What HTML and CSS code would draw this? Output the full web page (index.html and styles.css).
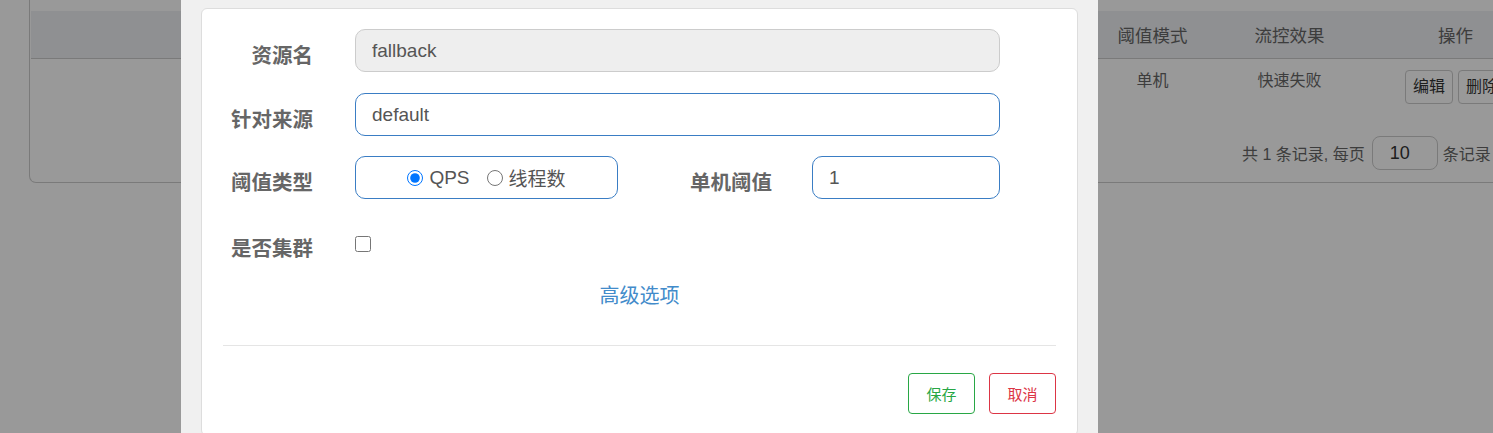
FILE: index.html
```html
<!DOCTYPE html>
<html lang="zh-CN">
<head>
<meta charset="utf-8">
<title>流控规则</title>
<link rel="stylesheet" href="styles.css">
</head>
<body>
<div class="page">
  <div class="table-card">
    <div class="thead">
      <div class="cell"></div>
      <div class="cell">阈值模式</div>
      <div class="cell">流控效果</div>
      <div class="cell">操作</div>
      <div class="cell"></div>
    </div>
    <div class="trow">
      <div class="cell"></div>
      <div class="cell">单机</div>
      <div class="cell">快速失败</div>
      <div class="cell ops"><span class="tbtn">编辑</span><span class="tbtn">删除</span></div>
      <div class="cell"></div>
    </div>
    <div class="pager">共 1 条记录, 每页<span class="pagesize">10</span>条记录</div>
  </div>
</div>
<div class="overlay"></div>
<div class="modal">
  <div class="modal-card">
    <div class="form-row">
      <label class="flabel">资源名</label>
      <input class="finput finput-full disabled" value="fallback" readonly>
    </div>
    <div class="form-row row2">
      <label class="flabel">针对来源</label>
      <input class="finput finput-full" value="default" readonly>
    </div>
    <div class="form-row row3">
      <label class="flabel">阈值类型</label>
      <div class="radio-box">
        <label class="radio-item"><input type="radio" name="grade" checked>QPS</label>
        <label class="radio-item second"><input type="radio" name="grade">线程数</label>
      </div>
      <label class="flabel flabel2">单机阈值</label>
      <input class="finput finput-small" value="1" readonly>
    </div>
    <div class="form-row row4">
      <label class="flabel">是否集群</label>
      <input class="fcheck" type="checkbox">
    </div>
    <div class="adv">高级选项</div>
    <div class="divider"></div>
    <div class="actions">
      <button class="btn btn-save">保存</button>
      <button class="btn btn-cancel">取消</button>
    </div>
  </div>
</div>
</body>
</html>
```
FILE: styles.css
```css
* { box-sizing: border-box; }
html, body { margin: 0; padding: 0; }
body {
  position: relative;
  width: 1493px;
  height: 433px;
  overflow: hidden;
  background: #fff;
  font-family: "Liberation Sans", "Noto Sans CJK SC", sans-serif;
}

/* background table */
.page { padding-left: 29px; }
.table-card {
  width: 1560px;
  background: #fff;
  border: 1px solid #ccc;
  border-top: none;
  border-radius: 0 0 7px 7px;
  padding: 11px 1px 0 1px;
  color: #666;
}
.thead, .trow {
  display: grid;
  grid-template-columns: 1053px 137px 137px 195px 1fr;
}
.thead {
  height: 48px;
  align-items: center;
  background: #eef0f3;
  border-bottom: 1px solid #ccc;
  font-size: 17.5px;
}
.cell { text-align: center; white-space: nowrap; }
.trow {
  padding: 11px 0;
  font-size: 16px;
  line-height: 22px;
  align-items: start;
}
.ops { display: flex; justify-content: center; gap: 5px; }
.tbtn {
  display: inline-block;
  height: 34px;
  padding: 0 7px;
  border: 1px solid #ccc;
  border-radius: 4px;
  line-height: 32px;
  color: #333;
}
.pager {
  margin-top: 21px;
  padding-left: 1211px;
  padding-bottom: 12px;
  display: flex;
  align-items: center;
  font-size: 16px;
  white-space: nowrap;
  color: #666;
}
.pagesize {
  display: inline-block;
  width: 66px;
  height: 34px;
  margin: 0 5px 0 7px;
  border: 1px solid #ccc;
  border-radius: 8px;
  padding-left: 17px;
  font-size: 18px;
  line-height: 32px;
  color: #333;
}

.overlay {
  position: absolute;
  inset: 0;
  background: rgba(0, 0, 0, 0.4);
}

/* modal */
.modal {
  position: absolute;
  top: 0;
  left: 181px;
  width: 917px;
  height: 433px;
  overflow: hidden;
  background: #f0f0f0;
  padding: 8px 20px 0 20px;
}
.modal-card {
  background: #fff;
  border: 1px solid #ddd;
  border-radius: 6px;
  padding: 20px 21px 21px 21px;
}
.form-row {
  display: flex;
  align-items: center;
  height: 43px;
}
.row2 { margin-top: 21px; }
.row3 { margin-top: 20px; }
.row4 { margin-top: 23px; height: 44px; }
.flabel {
  flex: none;
  width: 90px;
  margin-right: 42px;
  padding-top: 6px;
  text-align: right;
  font-family: "Noto Sans CJK SC", sans-serif;
  font-weight: bold;
  font-size: 20.5px;
  color: #666;
  white-space: nowrap;
}
.flabel2 { width: 154px; margin-right: 40px; }
.finput {
  flex: none;
  height: 43px;
  border: 1px solid #3a7dc4;
  border-radius: 10px;
  padding: 0 16px;
  background: #fff;
  font-family: "Liberation Sans", "Noto Sans CJK SC", sans-serif;
  font-size: 19px;
  color: #555;
  outline: none;
}
.finput-full { width: 645px; }
.finput-small { width: 188px; }
.finput.disabled { background: #eee; border-color: #ccc; }
.radio-box {
  flex: none;
  width: 263px;
  height: 43px;
  border: 1px solid #3a7dc4;
  border-radius: 10px;
  display: flex;
  align-items: center;
  justify-content: center;
  font-size: 19px;
  color: #555;
}
.radio-item { display: flex; align-items: center; white-space: nowrap; }
.radio-item input { width: 16px; height: 16px; margin: 0 6px 0 0; }
.radio-item.second { margin-left: 17px; }
.fcheck { width: 16px; height: 16px; margin: 0; }
.adv {
  margin-top: 17px;
  text-align: center;
  font-size: 20px;
  line-height: 26px;
  color: #428bca;
}
.divider { margin-top: 36px; height: 1px; background: #e5e5e5; }
.actions {
  margin-top: 27px;
  display: flex;
  justify-content: flex-end;
  gap: 14px;
}
.btn {
  width: 67px;
  height: 41px;
  background: #fff;
  border: 1px solid;
  border-radius: 4px;
  font-family: "Noto Sans CJK SC", sans-serif;
  font-size: 15px;
  padding: 0;
}
.btn-save { color: #28a745; border-color: #28a745; }
.btn-cancel { color: #dc3545; border-color: #dc3545; }
```
